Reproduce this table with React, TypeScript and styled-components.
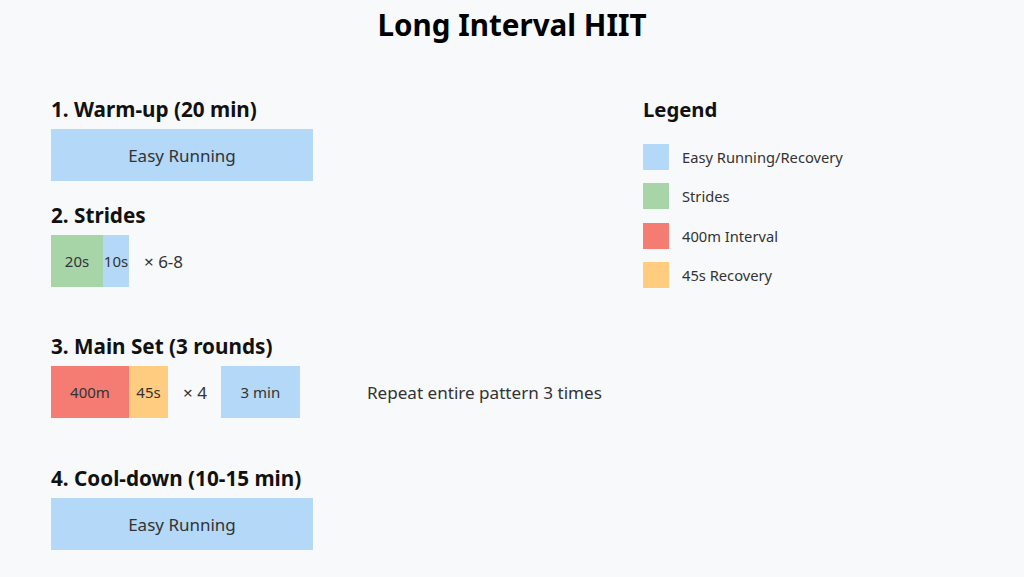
import React from "react";
import styled, { createGlobalStyle } from "styled-components";

const COLORS = {
  easy: "#b3d8f8",
  stride: "#a8d5a8",
  interval: "#f57c73",
  recovery: "#ffcc80",
};

const GlobalStyle = createGlobalStyle`
  html, body {
    margin: 0;
    padding: 0;
    background: #f8f9fa;
  }
  body {
    font-family: "Noto Sans", "Open Sans", sans-serif;
    color: #222;
  }
`;

const Page = styled.div`
  width: 1024px;
  height: 577px;
  box-sizing: border-box;
  padding: 7px 0 0 51px;
  background: #f8f9fa;
  overflow: hidden;
`;

const Title = styled.h1`
  margin: 0 0 0 -51px;
  text-align: center;
  font-size: 29.6px;
  font-weight: 700;
  line-height: 36px;
  color: #000;
`;

const Columns = styled.div`
  display: flex;
  margin-top: 54px;
`;

const Plan = styled.div`
  width: 592px;
  display: flex;
  flex-direction: column;
`;

const Section = styled.section<{ $space: number }>`
  margin-top: ${(p) => p.$space}px;
`;

const Heading = styled.h2`
  margin: 0 0 8px;
  font-size: 20.7px;
  font-weight: 700;
  line-height: 24px;
  color: #111;
`;

const Row = styled.div`
  display: flex;
  align-items: center;
  height: 52px;
`;

const Block = styled.div<{ $color: string; $width: number; $size?: number }>`
  width: ${(p) => p.$width}px;
  height: 52px;
  background: ${(p) => p.$color};
  display: flex;
  align-items: center;
  justify-content: center;
  font-size: ${(p) => p.$size ?? 15}px;
  color: #333;
  flex-shrink: 0;
`;

const Times = styled.span<{ $left: number; $right?: number }>`
  margin: 0 ${(p) => p.$right ?? 0}px 0 ${(p) => p.$left}px;
  font-size: 17px;
  color: #333;
`;

const Note = styled.span`
  margin-left: 67px;
  font-size: 17.1px;
  color: #333;
`;

const Legend = styled.aside`
  display: flex;
  flex-direction: column;
`;

const LegendTitle = styled.h3`
  margin: 0 0 23px;
  font-size: 20.3px;
  font-weight: 700;
  line-height: 24px;
  color: #111;
`;

const LegendItem = styled.div`
  display: flex;
  align-items: center;
  height: 26px;
  margin-bottom: 13.3px;
`;

const Swatch = styled.span<{ $color: string }>`
  width: 26px;
  height: 26px;
  background: ${(p) => p.$color};
  margin-right: 13px;
`;

const LegendLabel = styled.span`
  font-size: 14.7px;
  color: #333;
`;

const legend = [
  { color: COLORS.easy, label: "Easy Running/Recovery" },
  { color: COLORS.stride, label: "Strides" },
  { color: COLORS.interval, label: "400m Interval" },
  { color: COLORS.recovery, label: "45s Recovery" },
];

export default function App() {
  return (
    <Page>
      <GlobalStyle />
      <Title>Long Interval HIIT</Title>
      <Columns>
        <Plan>
          <Section $space={0}>
            <Heading>1. Warm-up (20 min)</Heading>
            <Row>
              <Block $color={COLORS.easy} $width={262} $size={17}>
                Easy Running
              </Block>
            </Row>
          </Section>
          <Section $space={22}>
            <Heading>2. Strides</Heading>
            <Row>
              <Block $color={COLORS.stride} $width={52}>
                20s
              </Block>
              <Block $color={COLORS.easy} $width={26}>
                10s
              </Block>
              <Times $left={15}>× 6-8</Times>
            </Row>
          </Section>
          <Section $space={47}>
            <Heading>3. Main Set (3 rounds)</Heading>
            <Row>
              <Block $color={COLORS.interval} $width={78}>
                400m
              </Block>
              <Block $color={COLORS.recovery} $width={39}>
                45s
              </Block>
              <Times $left={15} $right={14}>
                × 4
              </Times>
              <Block $color={COLORS.easy} $width={79}>
                3 min
              </Block>
              <Note>Repeat entire pattern 3 times</Note>
            </Row>
          </Section>
          <Section $space={48}>
            <Heading>4. Cool-down (10-15 min)</Heading>
            <Row>
              <Block $color={COLORS.easy} $width={262} $size={17}>
                Easy Running
              </Block>
            </Row>
          </Section>
        </Plan>
        <Legend>
          <LegendTitle>Legend</LegendTitle>
          {legend.map((item) => (
            <LegendItem key={item.label}>
              <Swatch $color={item.color} />
              <LegendLabel>{item.label}</LegendLabel>
            </LegendItem>
          ))}
        </Legend>
      </Columns>
    </Page>
  );
}
